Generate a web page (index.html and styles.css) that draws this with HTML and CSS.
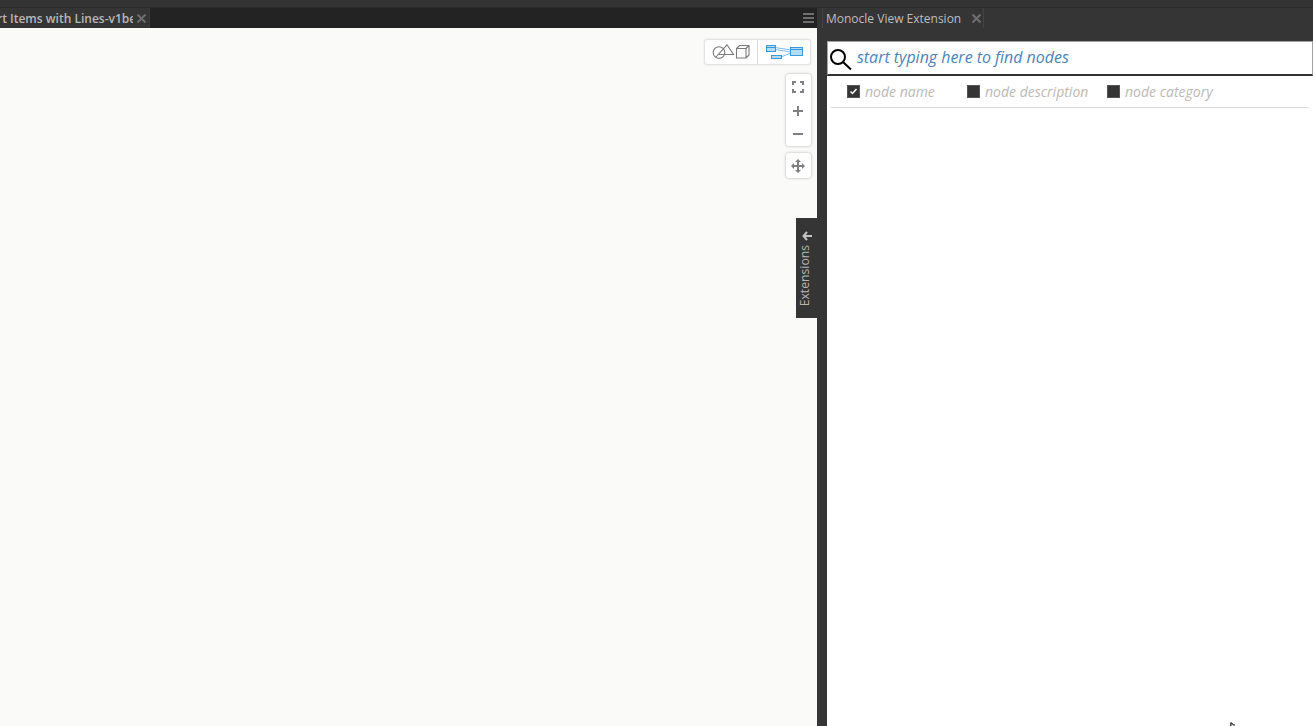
FILE: index.html
```html
<!DOCTYPE html>
<html lang="en">
<head>
<meta charset="utf-8">
<title>Monocle View Extension</title>
<link rel="stylesheet" href="styles.css">
</head>
<body>
<div class="topstrip"></div>
<div class="workspace">
  <section class="left-pane">
    <div class="tabbar">
      <div class="tab">
        <span class="tab-title">rt Items with Lines-v1beta</span>
        <svg class="tab-close" width="9" height="9" viewBox="0 0 9 9" stroke="#6e6e6e" stroke-width="2"><path d="M.5.5l8 8M8.500.5l-8 8"/></svg>
      </div>
      <div class="tabbar-fill"></div>
      <svg class="hamburger" width="11" height="10" viewBox="0 0 11 10"><path d="M0 1h11M0 5h11M0 9h11" stroke="#6e6e6e" stroke-width="2"/></svg>
    </div>
    <div class="canvas">
      <div class="view-toggle">
        <div class="toggle-btn geom">
          <svg width="38" height="16" viewBox="0 0 38 16" fill="none" stroke="#7a7a7a" stroke-width="1.100">
            <circle cx="7" cy="8.500" r="5.800"/>
            <path d="M4 13 L15 .8 L21.500 10.500 L7 10.500"/>
            <path d="M24.500 4.500h9.500v9.500h-9.500zM24.500 4.500l3-3h9.500v9.500l-3 3M34 4.500l3-3"/>
          </svg>
        </div>
        <div class="toggle-btn graph">
          <svg width="40" height="16" viewBox="0 0 40 16" fill="none">
            <path d="M11 3.500 L27 6M11 5.500 L27 8M17 13 L27 9" stroke="#7dbeea" stroke-width="1"/>
            <rect x="2.500" y="1.500" width="9" height="6" fill="#b5dcf5" stroke="#3a9ad9"/>
            <path d="M3 3.500h8" stroke="#3a9ad9"/>
            <rect x="7.500" y="11.500" width="10" height="3" fill="#b5dcf5" stroke="#3a9ad9"/>
            <rect x="26.500" y="3.500" width="12" height="8" fill="#b5dcf5" stroke="#3a9ad9"/>
            <path d="M27 5.500h11" stroke="#3a9ad9"/>
          </svg>
        </div>
      </div>
      <div class="zoom-stack">
        <button class="zoom-btn">
          <svg width="12" height="12" viewBox="0 0 12 12" fill="none" stroke="#808080" stroke-width="2"><path d="M1 4V1h3M8 1h3v3M1 8v3h3M8 11h3V8"/></svg>
        </button>
        <button class="zoom-btn zoom-plus">
          <svg width="12" height="12" viewBox="0 0 12 12" stroke="#808080" stroke-width="2"><path d="M1 6h10M6 1v10"/></svg>
        </button>
        <button class="zoom-btn">
          <svg width="12" height="12" viewBox="0 0 12 12" stroke="#808080" stroke-width="2"><path d="M1 6h10"/></svg>
        </button>
      </div>
      <button class="pan-btn">
        <svg width="14" height="14" viewBox="0 0 14 14" fill="#808080"><path d="M6 3h2v3h3V4l3 3-3 3V8H8v3h2l-3 3-3-3h2V8H3v2L0 7l3-3v2h3V3H4l3-3 3 3H8z"/></svg>
      </button>
      <div class="ext-tab">
        <svg width="10" height="10" viewBox="0 0 10 10" fill="none" stroke="#c4c4c4" stroke-width="2"><path d="M5 1L1.500 5 5 9M2 5h8"/></svg>
        <span class="ext-label">Extensions</span>
      </div>
    </div>
  </section>
  <section class="right-pane">
    <div class="tabbar-right">
      <div class="tab-right">
        <span class="tab-right-title">Monocle View Extension</span>
        <svg class="tab-close" width="9" height="9" viewBox="0 0 9 9" stroke="#6e6e6e" stroke-width="2"><path d="M.5.5l8 8M8.500.5l-8 8"/></svg>
      </div>
    </div>
    <div class="panel">
      <div class="search">
        <svg class="search-icon" width="23" height="23" viewBox="0 0 23 23" fill="none" stroke="#000"><circle cx="9" cy="9" r="7" stroke-width="2"/><path d="M14 14l8 7.500" stroke-width="2"/></svg>
        <span class="search-text">start typing here to find nodes</span>
      </div>
      <div class="options">
        <label class="opt opt-name"><span class="box"><svg width="13" height="13" viewBox="0 0 13 13" fill="none" stroke="#fff" stroke-width="1.500"><path d="M3.500 6.500l2 2 4-4.500"/></svg></span>node name</label>
        <label class="opt opt-desc"><span class="box"></span>node description</label>
        <label class="opt"><span class="box"></span>node category</label>
      </div>
    </div>
  </section>
</div>
<svg class="cursor" width="6" height="4" viewBox="0 0 6 4"><path d="M0 0v4h1V1h1v1h1v1h2" fill="none" stroke="#222"/></svg>
</body>
</html>
```
FILE: styles.css
```css
* { box-sizing: border-box; }
html, body { height: 100%; }
body {
  margin: 0;
  height: 726px;
  overflow: hidden;
  display: flex;
  flex-direction: column;
  position: relative;
  background: #353535;
  font-family: "Open Sans", "Liberation Sans", sans-serif;
}
.topstrip {
  height: 8px;
  flex: none;
  background: #333;
  border-bottom: 1px solid #292929;
}
.workspace { flex: 1; display: flex; min-height: 0; }
.left-pane { width: 817px; flex: none; display: flex; flex-direction: column; }
.tabbar { height: 20px; flex: none; display: flex; align-items: center; background: #232323; }
.tab {
  width: 149px;
  height: 100%;
  flex: none;
  display: flex;
  align-items: center;
  background: #353535;
}
.tab-title {
  width: 133px;
  flex: none;
  overflow: hidden;
  white-space: nowrap;
  text-indent: -3px;
  font-size: 12px;
  font-weight: 600;
  color: #b8b8b8;
}
.tab-close { margin-left: 4px; flex: none; }
.tabbar-fill { flex: 1; align-self: stretch; border-left: 1px solid #3a3a3a; }
.hamburger { margin-right: 3px; flex: none; }
.canvas { flex: 1; position: relative; background: #fafaf8; }
.view-toggle {
  position: absolute;
  top: 11px;
  right: 6px;
  height: 26px;
  display: flex;
  background: #fff;
  border: 1px solid #e3e3e3;
  border-radius: 3px;
  box-shadow: 0 0 2px rgba(0,0,0,.1);
}
.toggle-btn { display: flex; align-items: center; justify-content: center; }
.geom { width: 53px; border-right: 1px solid #dcdcdc; padding-right: 1px; }
.graph { width: 52px; }
.zoom-stack {
  position: absolute;
  top: 46px;
  right: 6px;
  width: 25px;
  height: 72px;
  display: flex;
  flex-direction: column;
  padding: 1px 1px 0 0;
  background: #fff;
  border-radius: 3px;
  box-shadow: 0 0 3px rgba(0,0,0,.3);
}
.zoom-btn {
  height: 23px;
  flex: none;
  padding: 0;
  border: 0;
  background: none;
  display: flex;
  align-items: center;
  justify-content: center;
}
.zoom-plus { margin-top: 1px; }
.pan-btn {
  position: absolute;
  top: 125px;
  right: 6px;
  width: 25px;
  height: 25px;
  padding: 0 1px 0 0;
  border: 0;
  background: #fff;
  border-radius: 3px;
  box-shadow: 0 0 3px rgba(0,0,0,.3);
  display: flex;
  align-items: center;
  justify-content: center;
}
.ext-tab {
  position: absolute;
  top: 190px;
  right: 0;
  width: 21px;
  height: 100px;
  background: #353535;
  display: flex;
  flex-direction: column;
  align-items: center;
  gap: 4px;
  padding-top: 13px;
  padding-left: 1px;
}
.ext-label {
  writing-mode: vertical-rl;
  transform: rotate(180deg);
  font-size: 12.2px;
  line-height: 14px;
  color: #b4b4b4;
  margin-left: -4px;
}
.right-pane { flex: 1; display: flex; flex-direction: column; min-width: 0; }
.tabbar-right { height: 20px; flex: none; padding-left: 5px; }
.tab-right {
  width: 162px;
  height: 100%;
  padding-left: 3px;
  display: flex;
  align-items: center;
  border-left: 1px solid #444;
  border-right: 1px solid #444;
}
.tab-right-title { font-size: 12px; color: #bdbdbd; white-space: nowrap; }
.tab-right .tab-close { margin-left: 11px; margin-top: 1px; }
.panel {
  flex: 1;
  margin-left: 10px;
  margin-top: 13px;
  background: #fff;
  display: flex;
  flex-direction: column;
}
.search {
  height: 35px;
  flex: none;
  display: flex;
  align-items: center;
  gap: 5px;
  padding-left: 1px;
  border: 1px solid #a3a3a3;
  border-bottom: 2px solid #333;
  background: #fff;
}
.search-icon { flex: none; margin-top: 2px; }
.search-text { font-size: 15.95px; font-style: italic; color: #4b84b8; white-space: nowrap; margin-top: -2px; }
.options {
  height: 32px;
  flex: none;
  margin: 0 4px;
  padding-left: 16px;
  display: flex;
  align-items: center;
  border-bottom: 1px solid #dcdcdc;
}
.opt {
  display: flex;
  align-items: center;
  gap: 5px;
  font-size: 14px;
  font-style: italic;
  color: #bdb9b6;
  white-space: nowrap;
}
.opt-name { width: 120px; }
.opt-desc { width: 140px; }
.box { width: 13px; height: 13px; flex: none; background: #353535; border: 1px solid #555; display: flex; align-items: center; justify-content: center; }
.box svg { flex: none; }
.cursor { position: absolute; left: 1230px; top: 722px; }
```
